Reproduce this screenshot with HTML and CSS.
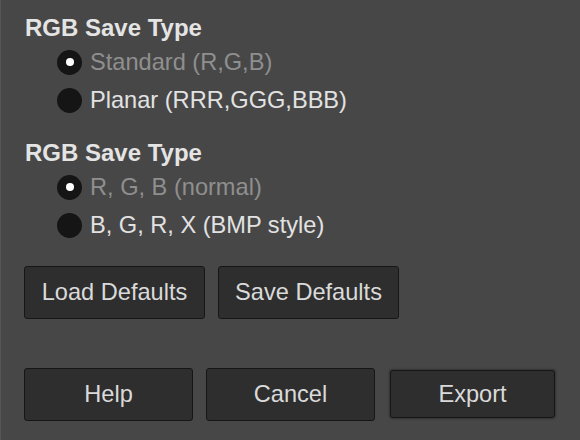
FILE: index.html
```html
<!DOCTYPE html>
<html>
<head>
<meta charset="utf-8">
<link rel="stylesheet" href="styles.css">
</head>
<body>
<div class="panel">
  <section class="group">
    <h2 class="title">RGB Save Type</h2>
    <div class="radio selected"><span class="dot"></span><span class="label">Standard (R,G,B)</span></div>
    <div class="radio"><span class="dot"></span><span class="label">Planar (RRR,GGG,BBB)</span></div>
  </section>
  <section class="group">
    <h2 class="title">RGB Save Type</h2>
    <div class="radio selected"><span class="dot"></span><span class="label">R, G, B (normal)</span></div>
    <div class="radio"><span class="dot"></span><span class="label">B, G, R, X (BMP style)</span></div>
  </section>
  <div class="defaults">
    <button class="btn">Load Defaults</button>
    <button class="btn">Save Defaults</button>
  </div>
  <div class="actions">
    <div class="cell"><button class="btn">Help</button></div>
    <div class="cell"><button class="btn">Cancel</button></div>
    <div class="cell"><button class="btn default">Export</button></div>
  </div>
</div>
</body>
</html>
```
FILE: styles.css
```css
html, body {
  margin: 0;
  padding: 0;
  background: #474747;
}
.panel {
  width: 580px;
  height: 440px;
  box-sizing: border-box;
  border-left: 1px solid #555555;
  padding: 16px 0 0 0;
  font-family: "Liberation Sans", Arial, sans-serif;
  display: flex;
  flex-direction: column;
}
.group {
  display: flex;
  flex-direction: column;
  margin-bottom: 22px;
}
.title {
  margin: 0 0 3px 24px;
  font-size: 24px;
  line-height: 24px;
  font-weight: bold;
  color: #e4e4e4;
}
.radio {
  height: 38px;
  display: flex;
  align-items: center;
  padding-left: 56px;
}
.dot {
  width: 25px;
  height: 25px;
  border-radius: 50%;
  background: #151515;
  margin-right: 8px;
  flex: none;
  display: flex;
  align-items: center;
  justify-content: center;
}
.radio.selected .dot::after {
  content: "";
  width: 8px;
  height: 8px;
  border-radius: 50%;
  background: #ffffff;
}
.label {
  font-size: 23.6px;
  line-height: 26px;
  color: #e2e2e2;
}
.radio.selected .label {
  color: #8f8f8f;
}
.defaults {
  display: flex;
  gap: 13px;
  padding-left: 23px;
}
.defaults .btn {
  width: 181px;
}
.btn {
  height: 53px;
  box-sizing: border-box;
  border: 1px solid #161616;
  border-radius: 3px;
  background: #2e2e2e;
  color: #dadada;
  font-family: "Liberation Sans", Arial, sans-serif;
  font-size: 23.6px;
  padding: 0;
}
.actions {
  display: flex;
  gap: 13px;
  padding-left: 23px;
  margin-top: 49px;
}
.cell {
  width: 169px;
  display: flex;
}
.cell .btn {
  width: 100%;
}
.cell .btn.default {
  margin: 2px 2px 3px 2px;
  height: 48px;
  box-shadow: 0 0 2px 1px rgba(0, 0, 0, 0.3);
}
```
